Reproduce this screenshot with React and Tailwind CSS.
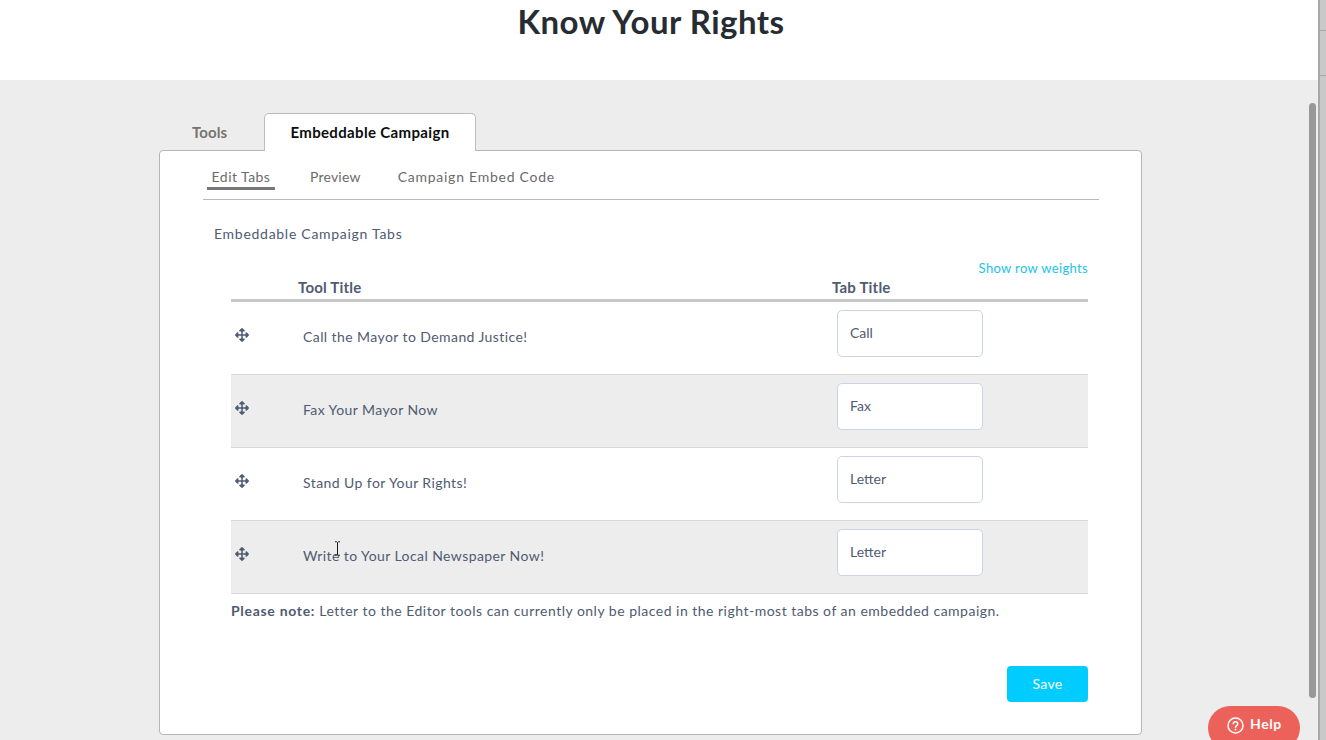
import React from "react";
import { FaArrowsAlt } from "react-icons/fa";

const rows = [
  { tool: "Call the Mayor to Demand Justice!", tab: "Call" },
  { tool: "Fax Your Mayor Now", tab: "Fax" },
  { tool: "Stand Up for Your Rights!", tab: "Letter" },
  { tool: "Write to Your Local Newspaper Now!", tab: "Letter" },
];

const App = () => {
  return (
    <div className="relative flex h-[740px] w-[1326px] overflow-hidden bg-[#ededed] font-['Lato','Liberation_Sans',sans-serif] text-[#4f5b72]">
      <div className="flex-1 flex flex-col">
        <header className="h-[80px] bg-white flex justify-center shrink-0 pr-[16px]">
          <h1 className="text-[33px] leading-[42px] font-bold text-[#272c33] tracking-[0.5px]">Know Your Rights</h1>
        </header>

        <main className="pl-[160px] pt-[33px]">
          <div className="flex h-[37px] items-end">
            <div className="w-[104px] h-[37px] pl-[32px] pt-[11px] text-[15px] leading-[17px] font-bold text-[#77736f] tracking-[0.1px]">Tools</div>
            <div className="w-[212px] h-[38px] -mb-px z-10 relative bg-white border border-b-0 border-[#bdbdbd] rounded-t-[5px] text-center pt-[10px] text-[15px] leading-[17px] font-bold text-[#0d0d0d] tracking-[0.35px]">
              Embeddable Campaign
            </div>
          </div>

          <section className="-ml-px w-[983px] h-[585px] bg-white border border-[#b5b5b5] rounded-[4px] pl-[43px] pr-[42px]">
            <nav className="h-[49px] border-b border-[#b9b9b9] flex text-[14px] text-[#6b6b6b]">
              <div className="ml-[4px] w-[68px] h-[39px] border-b-[3px] border-[#777777] text-center pt-[16px] leading-[20px] tracking-[0.45px]">Edit Tabs</div>
              <div className="ml-[35px] pt-[16px] leading-[20px] tracking-[0.2px]">Preview</div>
              <div className="ml-[37px] pt-[16px] leading-[20px] tracking-[0.75px]">Campaign Embed Code</div>
            </nav>

            <p className="ml-[11px] mt-[24px] text-[14px] leading-[20px] tracking-[0.72px]">Embeddable Campaign Tabs</p>

            <div className="ml-[28px] w-[857px]">
              <div className="mt-[15px] text-right text-[13px] leading-[18px] text-[#1cc3ea] tracking-[0.35px]">Show row weights</div>
              <div className="h-[26px] flex border-b-[3px] border-[#c8c8c8] text-[15px] leading-[20px] font-bold tracking-[0.2px] -mt-[1px]">
                <div className="ml-[67px] w-[534px] pt-[1px]">Tool Title</div>
                <div className="pt-[1px]">Tab Title</div>
              </div>

              {rows.map((row, i) => (
                <div
                  key={row.tool}
                  className={`h-[73px] flex border-b border-[#d8d8d8] ${i % 2 === 1 ? "bg-[#ededed]" : "bg-white"}`}
                >
                  <div className="w-[72px] pl-[4px] pt-[26px] shrink-0">
                    <FaArrowsAlt className="w-[14px] h-[14px] text-[#4f5b72]" />
                  </div>
                  <div className="w-[534px] pt-[25px] text-[14px] leading-[20px] tracking-[0.42px]">{row.tool}</div>
                  <div className="mt-[8px] w-[146px] h-[47px] bg-white border border-[#c9d5e3] rounded-[5px] pl-[12px] pt-[12px] text-[14px] leading-[20px]">
                    {row.tab}
                  </div>
                </div>
              ))}

              <p className="mt-[7px] text-[14px] leading-[20px] tracking-[0.49px] whitespace-nowrap">
                <span className="font-bold tracking-[0.7px]">Please note:</span> Letter to the Editor tools can currently only be placed in the right-most tabs of an embedded campaign.
              </p>

              <div className="flex justify-end mt-[45px]">
                <button className="w-[81px] h-[36px] bg-[#00ccff] rounded-[4px] text-white text-[14px] leading-[36px] tracking-[0.3px]">Save</button>
              </div>
            </div>
          </section>
        </main>
      </div>

      {/* window edge on the right */}
      <div className="w-[8px] shrink-0 flex flex-col bg-[#c9c9c9] border-l-[2px] border-[#a8a8a8]">
        <div className="h-[31px] border-b border-[#a8a8a8]"></div>
        <div className="h-[45px] border-b border-[#a8a8a8]"></div>
      </div>

      {/* scrollbar thumb */}
      <div className="absolute left-[1309px] top-[103px] w-[7px] h-[595px] rounded-full bg-[#989898]"></div>

      {/* help button */}
      <div className="absolute left-[1208px] top-[706px] w-[92px] h-[44px] rounded-full bg-[#ec625a] text-white flex items-start pl-[19px] pt-[9px] gap-[6px]">
        <svg width="17" height="17" viewBox="0 0 17 17" fill="none" className="mt-[2px]">
          <circle cx="8.5" cy="8.5" r="7.5" stroke="white" strokeWidth="1.5" />
          <path d="M6.3 6.8a2.2 2.2 0 1 1 3.4 1.9c-.8.5-1.2.9-1.2 1.8" stroke="white" strokeWidth="1.5" strokeLinecap="round" />
          <circle cx="8.5" cy="12.6" r="0.95" fill="white" />
        </svg>
        <span className="text-[14px] leading-[18px] font-bold tracking-[0.6px]">Help</span>
      </div>

      {/* text cursor */}
      <svg className="absolute left-[334px] top-[541px]" width="7" height="15" viewBox="0 0 7 15" fill="none">
        <path d="M1 .8h1.6l.9.8.9-.8H6M3.5 1.6v11.8M1 14.2h1.6l.9-.8.9.8H6" stroke="#1a1a1a" strokeWidth="1" />
      </svg>
    </div>
  );
};

export default App;
